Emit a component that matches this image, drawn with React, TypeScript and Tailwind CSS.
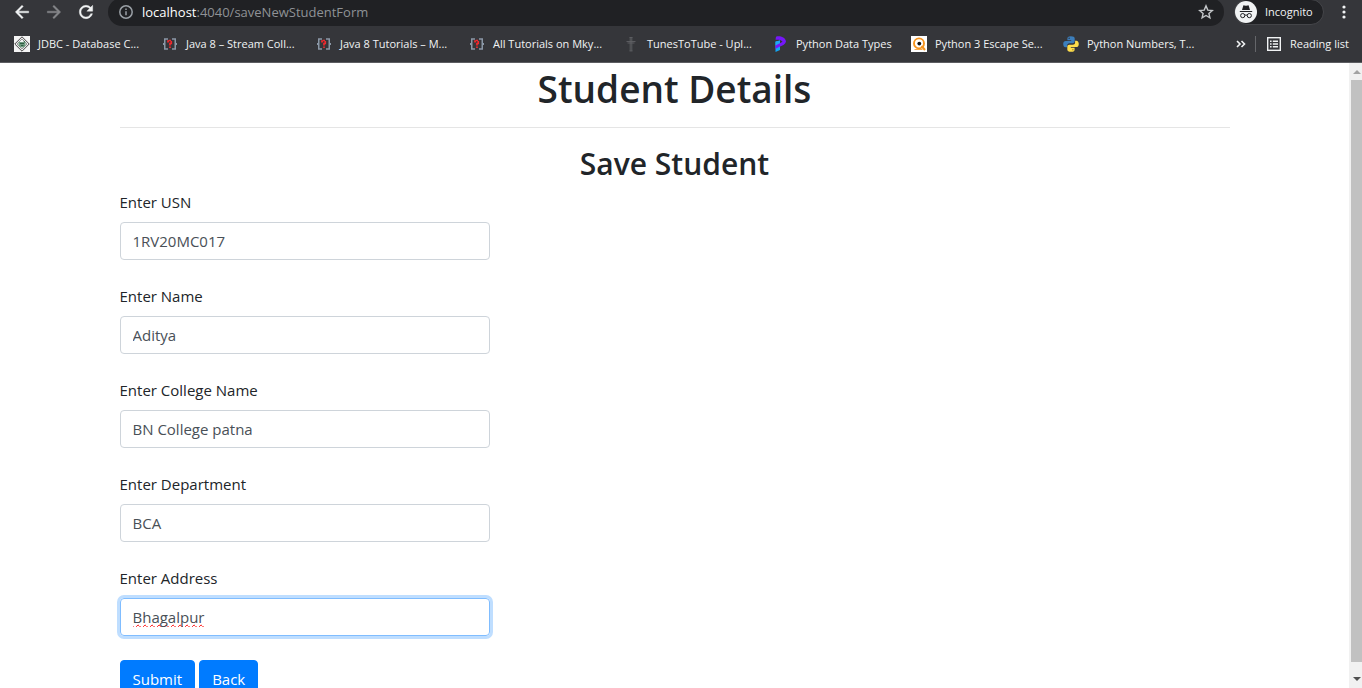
import type { ReactNode } from "react";

const ARROW = "M20 11H7.83l5.59-5.59L12 4l-8 8 8 8 1.41-1.41L7.83 13H20v-2z";

function JdbcIcon() {
  return (
    <svg viewBox="0 0 16 16" className="size-4" fill="none">
      <rect width="16" height="16" fill="#f4f4f4" />
      <path d="M8 .8 15.2 8 8 15.2.8 8Z" stroke="#444" strokeWidth="1" />
      <path d="M8 2.9 13.1 8 8 13.1 2.9 8Z" stroke="#777" strokeWidth=".8" />
      <path d="M4.500 6h7v2.500a3.500 3 0 0 1-7 0Z" fill="#6f9a80" />
      <path d="M6 7.500h4M7 9.500h2.500M9.500 5l1.500 1" stroke="#2f5d43" strokeWidth="1" />
    </svg>
  );
}

function MkyongIcon() {
  return (
    <svg viewBox="0 0 16 16" className="size-4" fill="none">
      <path d="M6 3H2.750v10H6M10 3h3.250v10H10" stroke="#8a97a6" strokeWidth="1.500" />
      <path d="M1 7h2v2H1zM13 7h2v2h-2z" fill="#8a97a6" />
      <path d="M6 6.500V5h1M7 4.500h2M9.250 5v2.500H8v2M8 10.500V12" stroke="#f0282d" strokeWidth="1.700" />
    </svg>
  );
}

function TunesIcon() {
  return (
    <svg viewBox="0 0 16 16" className="size-4" fill="none" stroke="#606164">
      <path d="M7.2 1v14M8.8 1v14" strokeWidth=".9" />
      <path d="M3.5 5.5h9M4.5 7h7" strokeWidth=".9" />
      <path d="M6.5 1.5h3M6.5 15h3" strokeWidth=".8" />
    </svg>
  );
}

function ProgramizIcon() {
  return (
    <svg viewBox="0 0 16 16" className="size-4">
      <path d="M3.500 5.500 8 4.500V14l-4.500 2Z" fill="#12a5f4" />
      <path d="M4 .8C7-.4 13 .6 14 5.200c-.5 3-3.500 4.300-6 5.300l-4.500 2.300V9.500C5.500 7.500 9.500 7 10.500 5.500 9 3.800 6 3.600 3.500 3.800Z" fill="#7517f8" />
      <path d="M3.500 5.800 8 4.600V7L3.500 9.600Z" fill="#22a7f0" />
    </svg>
  );
}

function QIcon() {
  return (
    <svg viewBox="0 0 16 16" className="size-4" fill="none">
      <rect width="16" height="16" fill="#fff" />
      <circle cx="8" cy="7.400" r="5" stroke="#f7941d" strokeWidth="1.900" />
      <path d="m10.500 10 3.500 4" stroke="#f7941d" strokeWidth="2" />
      <path d="M3.500 13.500h8" stroke="#f7941d" strokeWidth=".8" />
      <circle cx="8.300" cy="7.600" r="1.900" fill="#111" />
    </svg>
  );
}

function PythonIcon() {
  return (
    <svg viewBox="0 0 16 16" className="size-4">
      <path d="M7.900.2C5 .2 4.400 1.400 4.400 2.600v1.600h3.800v.7H2.700C1.200 4.900.2 6 .2 8s1 3.300 2.400 3.300h1.500V9.500c0-1.300 1-2.300 2.300-2.300h3.400c1.100 0 1.900-.8 1.900-1.900V2.600C11.700 1 10.400.2 7.900.2Z" fill="#3c7ebb" />
      <path d="M8.100 15.800c2.900 0 3.500-1.200 3.500-2.400v-1.600H7.800v-.7h5.500c1.500 0 2.500-1.100 2.500-3.100s-1-3.300-2.400-3.300h-1.300v1.800c0 1.300-1 2.300-2.300 2.300H6.200c-1.100 0-1.900.8-1.900 1.900v2.700c0 1.600 1.300 2.400 3.800 2.400Z" fill="#fddc4b" />
      <circle cx="6.100" cy="2.300" r=".75" fill="#35363a" />
      <circle cx="9.900" cy="13.700" r=".75" fill="#a08c30" />
    </svg>
  );
}

const bookmarks: { label: string; width: string; icon: ReactNode }[] = [
  { label: "JDBC - Database C...", width: "w-[108px]", icon: <JdbcIcon /> },
  { label: "Java 8 – Stream Coll...", width: "w-[114px]", icon: <MkyongIcon /> },
  { label: "Java 8 Tutorials – M...", width: "w-[113px]", icon: <MkyongIcon /> },
  { label: "All Tutorials on Mky...", width: "w-[114px]", icon: <MkyongIcon /> },
  { label: "TunesToTube - Upl...", width: "w-[109px]", icon: <TunesIcon /> },
  { label: "Python Data Types", width: "w-[99px]", icon: <ProgramizIcon /> },
  { label: "Python 3 Escape Se...", width: "w-[112px]", icon: <QIcon /> },
  { label: "Python Numbers, T...", width: "w-[111px]", icon: <PythonIcon /> },
];

function BrowserBar() {
  return (
    <header className="shrink-0 overflow-hidden border-b border-[#5c5d61] bg-[#35363a] text-[11px] text-[#f1f3f4]">
      <div className="flex h-6 items-center pr-2 pl-3">
        <nav className="flex shrink-0 items-center gap-3">
          <button type="button" aria-label="Back">
            <svg viewBox="0 0 24 24" className="size-5" fill="#f1f3f4" stroke="#f1f3f4" strokeWidth=".5"><path d={ARROW} /></svg>
          </button>
          <button type="button" aria-label="Forward">
            <svg viewBox="0 0 24 24" className="size-5 rotate-180" fill="#86878a" stroke="#86878a" strokeWidth=".5"><path d={ARROW} /></svg>
          </button>
          <button type="button" aria-label="Reload">
            <svg viewBox="0 0 24 24" className="size-5" fill="#f1f3f4" stroke="#f1f3f4" strokeWidth=".5">
              <path d="M17.650 6.350C16.200 4.900 14.210 4 12 4c-4.420 0-7.990 3.580-7.990 8s3.570 8 7.990 8c3.730 0 6.840-2.550 7.730-6h-2.080c-.820 2.330-3.040 4-5.650 4-3.310 0-6-2.690-6-6s2.690-6 6-6c1.660 0 3.140.690 4.220 1.780L13 11h7V4l-2.350 2.350z" />
            </svg>
          </button>
        </nav>
        <div className="ml-3 flex h-7 min-w-0 flex-1 items-center rounded-full bg-[#202124] px-2.5">
          <svg viewBox="0 0 16 16" className="size-4 shrink-0" fill="none" stroke="#9aa0a6" strokeWidth="1.500">
            <circle cx="8" cy="8" r="6.200" />
            <path d="M8 7.200v4M8 4.500v1.500" />
          </svg>
          <div className="ml-2 min-w-0 flex-1 pt-0.5 text-[13px] whitespace-nowrap text-[#8f9296]">
            <span className="text-white">localhost</span>:4040/saveNewStudentForm
          </div>
          <button type="button" aria-label="Bookmark this page">
            <svg viewBox="0 0 16 16" className="size-4" fill="none" stroke="#c4c7ca" strokeWidth="1.400">
              <path d="m8 1.900 1.800 4.200 4.500.4-3.400 3 1 4.400L8 11.500l-3.900 2.400 1-4.400-3.400-3 4.500-.4Z" />
            </svg>
          </button>
        </div>
        <button type="button" className="ml-2.5 flex h-[26px] shrink-0 items-center rounded-full border border-[#45464a] bg-[#202124] pr-2">
          <svg viewBox="0 0 22 22" className="size-[22px]" fill="none">
            <circle cx="11" cy="11" r="11" fill="#f1f3f4" />
            <path d="M7 9 8.200 4.900c.2-.5.600-.6 1-.5l1.800.4 1.800-.4c.4-.1.800 0 1 .5L15 9Z" fill="#202124" />
            <path d="M4.800 10.500h12.400" stroke="#202124" strokeWidth="1" />
            <circle cx="7.700" cy="14.600" r="2.100" stroke="#202124" />
            <circle cx="14.300" cy="14.600" r="2.100" stroke="#202124" />
            <path d="M9.800 14.300q1.200-.7 2.400 0" stroke="#202124" />
          </svg>
          <span className="ml-2 w-[50px] text-left">Incognito</span>
        </button>
        <button type="button" aria-label="Menu" className="ml-2.5">
          <svg viewBox="0 0 20 20" className="size-5" fill="#f1f3f4">
            <circle cx="10" cy="5" r="1.600" />
            <circle cx="10" cy="10" r="1.600" />
            <circle cx="10" cy="15" r="1.600" />
          </svg>
        </button>
      </div>
      <div className="flex h-[38px] items-center pt-0.5 pr-2.5 pl-3.5">
        <nav className="flex min-w-0 flex-1 gap-4 overflow-hidden">
          {bookmarks.map((b) => (
            <a key={b.label} href="#" className="flex shrink-0 items-center gap-2">
              {b.icon}
              <span className={`${b.width} whitespace-nowrap`}>{b.label}</span>
            </a>
          ))}
        </nav>
        <button type="button" aria-label="More bookmarks" className="shrink-0">
          <svg viewBox="0 0 12 12" className="size-3" fill="none" stroke="#f1f3f4" strokeWidth="1.600">
            <path d="m2 3 3 3-3 3M6.500 3l3 3-3 3" />
          </svg>
        </button>
        <span className="mx-2 h-4 w-px bg-[#65666a]" />
        <button type="button" className="ml-0.5 flex shrink-0 items-center gap-2">
          <svg viewBox="0 0 16 16" className="size-4" fill="none" stroke="#f1f3f4">
            <rect x="1.700" y="1.700" width="12.600" height="12.600" strokeWidth="1.400" />
            <path d="M4 5.200h1.600M4 8h1.600M4 10.800h1.600M6.800 5.200H12M6.800 8H12M6.800 10.800H12" strokeWidth="1.400" />
          </svg>
          <span className="w-[62px] text-left whitespace-nowrap">Reading list</span>
        </button>
      </div>
    </header>
  );
}

const fields = [
  { id: "usn", label: "Enter USN", value: "1RV20MC017" },
  { id: "name", label: "Enter Name", value: "Aditya" },
  { id: "college", label: "Enter College Name", value: "BN College patna" },
  { id: "department", label: "Enter Department", value: "BCA" },
  { id: "address", label: "Enter Address", value: "Bhagalpur", active: true },
];

function Scrollbar() {
  return (
    <div aria-hidden="true" className="flex w-[13px] shrink-0 flex-col bg-[#f1f1f1] pl-0.5">
      <div className="flex h-[17px] items-center justify-center">
        <svg viewBox="0 0 8 4" className="h-1 w-2" fill="#a3a3a3"><path d="M0 4 4 0l4 4Z" /></svg>
      </div>
      <div className="flex-1 bg-[#c1c1c1]" />
      <div className="flex h-[26px] items-center justify-center pt-2">
        <svg viewBox="0 0 8 4" className="h-1 w-2" fill="#505050"><path d="M0 0 4 4l4-4Z" /></svg>
      </div>
    </div>
  );
}

export default function App() {
  return (
    <div className="flex h-screen flex-col overflow-hidden bg-white font-['Open_Sans','Noto_Sans',sans-serif]">
      <BrowserBar />
      <div className="flex min-h-0 flex-1">
        <main className="min-w-0 flex-1 overflow-hidden text-[15px] leading-6 text-[#212529]">
          <div className="mx-auto w-full max-w-[1110px]">
            <h1 className="text-center text-[37px] leading-[52px] font-semibold">Student Details</h1>
            <hr className="mt-3 mb-4 border-[#e5e5e5]" />
            <h2 className="mb-1.5 text-center text-[30px] leading-10 font-semibold">Save Student</h2>
            <form onSubmit={(e) => e.preventDefault()}>
              {fields.map((f) => (
                <div key={f.id} className="mb-6">
                  <label htmlFor={f.id} className="mb-2 block">{f.label}</label>
                  <input
                    id={f.id}
                    type="text"
                    defaultValue={f.value}
                    className={`block h-[38px] w-1/3 rounded border px-3 text-[#495057] outline-none ${
                      f.active
                        ? "border-[#80bdff] underline decoration-[#ff0000] decoration-wavy decoration-1 ring-3 ring-[#bfdeff] [text-decoration-skip-ink:none]"
                        : "border-[#ced4da]"
                    }`}
                  />
                </div>
              ))}
              <div className="flex gap-1 text-white">
                <button type="submit" className="h-[38px] rounded border border-[#007bff] bg-[#007bff] px-3">Submit</button>
                <button type="button" className="h-[38px] rounded border border-[#007bff] bg-[#007bff] px-3">Back</button>
              </div>
            </form>
          </div>
        </main>
        <Scrollbar />
      </div>
    </div>
  );
}
